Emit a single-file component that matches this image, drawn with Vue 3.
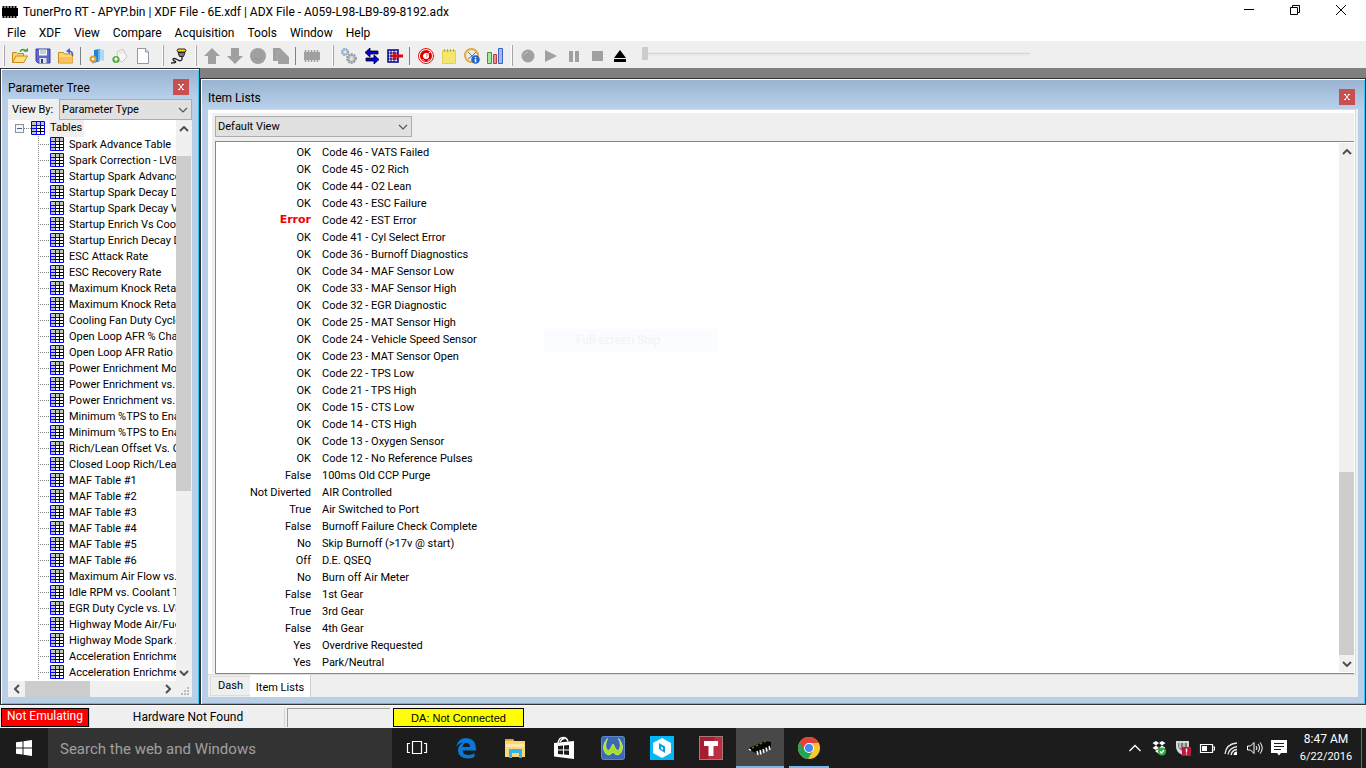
<script setup>
import { ref } from 'vue'

const menus = ['File', 'XDF', 'View', 'Compare', 'Acquisition', 'Tools', 'Window', 'Help']

const art = {
  open: '<path d="M.5 14.500V4.500h4l1 1h6v3" fill="#f7d270" stroke="#c58a1c"/><path d="M.5 14.500L4 8h11.500L12 14.500z" fill="#ffdd80" stroke="#c98d1d"/><path d="M8 3.500Q11-.5 14 3.500" fill="none" stroke="#35a02c" stroke-width="1.500"/><path d="M11.500 3.500H16V0z" fill="#35a02c"/>',
  save: '<path d="M1 1h14v14H3l-2-2z" fill="#5f66cc" stroke="#3b3f9c"/><path d="M4 1.500h8v6H4z" fill="#f6f6fa"/><path d="M5 3h6M5 5h6" stroke="#9aa"/><path d="M4.500 10h7v5h-7z" fill="#dfe2ea"/><path d="M6 11h2v4H6z" fill="#3a3f80"/>',
  close: '<path d="M.5 4.500h5l1 1.500h8v9H.5z" fill="#fbd77c" stroke="#c98d1d"/><path d="M1 9h13.500v5.500H1z" fill="#f3c25e"/><path d="M14.500 8Q15 3 10.500 3" fill="none" stroke="#4a63c4" stroke-width="1.600"/><path d="M8 3l4-3v6z" fill="#4a63c4"/>',
  xdf: '<path d="M5 2l6-1v12l-6 2z" fill="#1687d9"/><path d="M11 1l4 1v11l-4-1z" fill="#a9d9f7"/><path d="M9 2l2-1v12l-2 .6z" fill="#64b5ec"/><circle cx="4" cy="11" r="3.500" fill="#e0a03a"/><circle cx="4" cy="11" r="1.300" fill="#fff"/><path d="M4 13v2.500" stroke="#b87914"/>',
  adx: '<path d="M5 4l6-3 4 8-5 5-4-2z" fill="#f6f6f6" stroke="#c6c6c6"/><path d="M7 6l5-3" stroke="#d5d5d5"/><circle cx="4" cy="11.500" r="3.600" fill="#54a93b"/><path d="M4 13.500v-3M2.500 11.500L4 9.800l1.500 1.700" fill="none" stroke="#fff" stroke-width="1.200"/>',
  doc: '<path d="M2.500.5h8l3 3.500v11.500h-11z" fill="#fff" stroke="#8d97a5"/><path d="M10.500.5V4h3" fill="#dfe5ee" stroke="#8d97a5"/>',
  cable: '<path d="M6 2.500L7 1h7l1 1.500-1 1.500H7z" fill="#ffe200" stroke="#222"/><path d="M7 4.500h7l-1.500 4h-4z" fill="#777" stroke="#222"/><path d="M11 9v2.500Q9.500 14 6 11.500Q2.500 9.500 2 11.500Q2 13 4.500 13.500Q5.500 15 0 15" fill="none" stroke="#222" stroke-width="1.300"/>',
  up: '<path d="M8 0l8 8h-4v8H4V8H0z" fill="#a0a0a0"/>',
  down: '<path d="M8 16l8-8h-4V0H4v8H0z" fill="#a0a0a0"/>',
  face: '<circle cx="8" cy="8" r="8" fill="#a0a0a0"/><path d="M5 5h1M10 5h1M4 10q4 3 8 0" fill="none" stroke="#929292"/>',
  copy: '<path d="M0 0h7l4 4v9H0zM5 4h6l5 5v7H5z" fill="#a0a0a0"/><path d="M4.500 13V3.500H9" fill="none" stroke="#ababab"/>',
  chip: '<path d="M0 4h16v8H0z" fill="#a0a0a0"/><path d="M1.500 2v12M4.500 2v12M7.500 2v12M10.500 2v12M13.500 2v12" stroke="#a0a0a0" stroke-width="1.500"/>',
  gears: '<circle cx="4" cy="4" r="3" fill="#c6d6ea" stroke="#7d95b5" stroke-width="1.800" stroke-dasharray="1.600 .8"/><circle cx="4" cy="4" r="2.600" fill="#b3c8e2"/><circle cx="4" cy="4" r="1" fill="#f4f4f4"/><circle cx="10.500" cy="10.500" r="4.400" fill="none" stroke="#9599a0" stroke-width="2" stroke-dasharray="1.800 1"/><circle cx="10.500" cy="10.500" r="3.200" fill="#e4e6ea" stroke="#a2a6ad" stroke-width="1.600"/><circle cx="10.500" cy="10.500" r="1.200" fill="#fff" stroke="#aaa" stroke-width=".6"/>',
  swap: '<path d="M6 0v3h8v3H6v3L1 4.500zM10 7v3H2v3h8v3l5-4.500z" fill="#0000e0" stroke="#000" stroke-width=".8"/>',
  grid: '<path d="M1 2h10v12H1z" fill="#fff" stroke="#000080" stroke-width="1.500"/><path d="M1 5h10M1 8h10M1 11h10M4 2v12M7 2v12" stroke="#000080"/><path d="M4 8l5-4.500v3h7v3H9v3z" fill="#f00000"/>',
  target: '<circle cx="8" cy="8" r="7.500" fill="#fff" stroke="#e81010"/><circle cx="8" cy="8" r="4.500" fill="none" stroke="#e00000" stroke-width="3"/><circle cx="8" cy="8" r="2.500" fill="#fff"/><path d="M8 5.500l2.500 1.500L8 10z" fill="#d9b0b0"/><path d="M6 12.500L4.500 11M10 12.500l1.500-1.500M10.500 5.500L12 4" stroke="#fff"/>',
  note: '<path d="M1.500 2.500h13v13h-13z" fill="#f5e76d" stroke="#e5d34d"/><path d="M3.500 1v3M6.500 1v3M9.500 1v3M12.500 1v3" stroke="#a3a388"/>',
  clock: '<circle cx="7.500" cy="7.500" r="6.500" fill="#e4ebf3" stroke="#e5a63c" stroke-width="2"/><path d="M4 4l4 4 4-4M4 11l4-3" fill="none" stroke="#777"/><circle cx="11.500" cy="11.500" r="4.300" fill="#2065c9"/><path d="M11.500 9v1.200M11.500 11v3.200" stroke="#fff" stroke-width="1.500"/>',
  bars: '<path d="M.5 4.500h4v11h-4z" fill="#a6e89a" stroke="#3b9b32"/><path d="M6.500 6.500h3v9h-3z" fill="#f08c8c" stroke="#c23a3a"/><path d="M11.500.5h4v15h-4z" fill="#9dbbf7" stroke="#3a62c4"/>',
  rec: '<circle cx="8" cy="8" r="6.500" fill="#a0a0a0"/><path d="M4 7q1-3 4-3" fill="none" stroke="#c6c6c6"/>',
  play: '<path d="M2 2l12 6-12 6z" fill="#a0a0a0"/>',
  pause: '<path d="M3 3h4v11H3zM9 3h4v11H9z" fill="#a0a0a0"/>',
  stop: '<path d="M3 3h11v10H3z" fill="#a0a0a0"/>',
  eject: '<path d="M8 2l6 8H2zM2 11h12v3H2z" fill="#000"/>'
}

const toolbar = [
  { tools: ['open', 'save', 'close', '|', 'xdf', 'adx', 'doc'] },
  { wide: true, tools: ['cable'] },
  { tools: ['up', 'down', 'face', 'copy', '|', 'chip'] },
  { wide: true, tools: ['gears', 'swap', 'grid', '|', 'target', 'note', 'clock', 'bars'] },
  { tools: ['rec', 'play', 'pause', 'stop', 'eject'] }
]

const tables = [
  'Spark Advance Table', 'Spark Correction - LV8 vs. RPM', 'Startup Spark Advance', 'Startup Spark Decay Delay',
  'Startup Spark Decay Value', 'Startup Enrich Vs Coolant', 'Startup Enrich Decay Delay', 'ESC Attack Rate',
  'ESC Recovery Rate', 'Maximum Knock Retard', 'Maximum Knock Retard', 'Cooling Fan Duty Cycle',
  'Open Loop AFR % Change', 'Open Loop AFR Ratio', 'Power Enrichment Mode', 'Power Enrichment vs. RPM',
  'Power Enrichment vs. Temp', 'Minimum %TPS to Enable', 'Minimum %TPS to Enable', 'Rich/Lean Offset Vs. Coolant',
  'Closed Loop Rich/Lean', 'MAF Table #1', 'MAF Table #2', 'MAF Table #3', 'MAF Table #4', 'MAF Table #5',
  'MAF Table #6', 'Maximum Air Flow vs. RPM', 'Idle RPM vs. Coolant Temp', 'EGR Duty Cycle vs. LV8',
  'Highway Mode Air/Fuel', 'Highway Mode Spark Adv', 'Acceleration Enrichment', 'Acceleration Enrichment'
]

const items = [
  ['OK', 'Code 46 - VATS Failed'], ['OK', 'Code 45 - O2 Rich'], ['OK', 'Code 44 - O2 Lean'],
  ['OK', 'Code 43 - ESC Failure'], ['Error', 'Code 42 - EST Error'], ['OK', 'Code 41 - Cyl Select Error'],
  ['OK', 'Code 36 - Burnoff Diagnostics'], ['OK', 'Code 34 - MAF Sensor Low'], ['OK', 'Code 33 - MAF Sensor High'],
  ['OK', 'Code 32 - EGR Diagnostic'], ['OK', 'Code 25 - MAT Sensor High'], ['OK', 'Code 24 - Vehicle Speed Sensor'],
  ['OK', 'Code 23 - MAT Sensor Open'], ['OK', 'Code 22 - TPS Low'], ['OK', 'Code 21 - TPS High'],
  ['OK', 'Code 15 - CTS Low'], ['OK', 'Code 14 - CTS High'], ['OK', 'Code 13 - Oxygen Sensor'],
  ['OK', 'Code 12 - No Reference Pulses'], ['False', '100ms Old CCP Purge'], ['Not Diverted', 'AIR Controlled'],
  ['True', 'Air Switched to Port'], ['False', 'Burnoff Failure Check Complete'], ['No', 'Skip Burnoff (>17v @ start)'],
  ['Off', 'D.E. QSEQ'], ['No', 'Burn off Air Meter'], ['False', '1st Gear'], ['True', '3rd Gear'],
  ['False', '4th Gear'], ['Yes', 'Overdrive Requested'], ['Yes', 'Park/Neutral']
]

const apps = [
  { name: 'Task View', art: '<path d="M7.500 5.500h9v12h-9zM5 7.500H2.500v9H5M19 7.500h2.500v9H19" fill="none" stroke="#fff" stroke-width="1.200"/>' },
  { name: 'Edge', art: '<path d="M2 11Q4 2 12.500 2Q22 2.500 22 13v1.500H8.500q.5 4.500 6 4.500q3.500 0 6-1.800V21q-3 1.600-7 1.600Q4 22 4 14q0-4.500 5-7.500Q4.500 7 2 11zM8.600 11h7.400q0-4-3.500-4q-3.400.2-3.900 4z" fill="#0a78d8"/>' },
  { name: 'File Explorer', art: '<path d="M2 3h8l1 2h11v16H2z" fill="#f8d775"/><path d="M2 3h8l1 2H2z" fill="#e3a72f"/><path d="M3 8h18v3H3z" fill="#fde9a9"/><path d="M6 13h13v9h-3v-5H9v5H6z" fill="#35b4ec"/>' },
  { name: 'Store', art: '<path d="M2 7l20-2v18L2 20.500z" fill="#fff"/><path d="M6 7q1-5.500 5-5.500T16 5.500M8 6q2-3.500 4.500-3.500" fill="none" stroke="#fff" stroke-width="1.300"/><path d="M6 10l5-.5v4H6zM12 9.400l5-.5v4.600h-5zM6 14.500h5v4l-5-.6zM12 14.500h5v4.600l-5-.6z" fill="#1c1c1c"/>' },
  { name: 'WinTV', art: '<rect x=".5" y=".5" width="23" height="23" rx="2" fill="#3c68b5" stroke="#5d87c9"/><path d="M6.500 2.500Q0 10 4 16.500Q7.500 21.500 12 16Q16.500 21.500 20 16.500Q24 10 17.500 2.500Q20.500 9 18.500 13Q16.500 16.500 14.500 12.500L12 8L9.500 12.500Q7.500 16.500 5.500 13Q3.500 9 6.500 2.500z" fill="#a5e021" stroke="#d3f56c" stroke-width=".8"/>' },
  { name: 'Hex', art: '<path d="M0 0h24v24H0z" fill="#00b7f9"/><path d="M12 2l9 5v10l-9 5-9-5V7z" fill="#fff"/><path d="M9 7l6 3.500V17l-6-4z" fill="#079fd9"/><path d="M11 10.500l2 1.200V14l-2-1.200z" fill="#fff"/>' },
  { name: 'T', art: '<path d="M0 0h24v24H0z" fill="#a0787e"/><path d="M1 1h22v22H1z" fill="#a91c30"/><path d="M16 1h7v22H9z" fill="#c83b4d" opacity=".6"/><path d="M5 5h14v5h-4.500v10h-5V10H5z" fill="#fff"/>' },
  { name: 'TunerPro RT', active: true, art: '<path d="M1 12L17 5l6 1v5L8 17l-7-3z" fill="#050505"/><path d="M4 12l2-1M8 10l2-1M12 8l2-1M16 6l2-1" stroke="#686800" stroke-width="1.500"/><path d="M1 13l2 1.500M9 15l1 4M12 14l1 4.500M15 13l1 4M18 11.500l1 4M21 10l1 4" stroke="#fff" stroke-width="1.400"/>' },
  { name: 'Chrome', running: true, art: '<circle cx="12" cy="12" r="11" fill="#f7c92c"/><path d="M12 12L2.500 6.500A11 11 0 0 0 11 23l5-8.500z" fill="#25a35a"/><path d="M2.500 6.500A11 11 0 0 1 21.800 7H12l-4.500 7z" fill="#e1433a"/><circle cx="12" cy="12" r="5" fill="#fff"/><circle cx="12" cy="12" r="4" fill="#4688f1"/>' }
]

const tray = [
  { name: 'Show hidden icons', art: '<path d="M2.500 11L8 5.500l5.500 5.500" fill="none" stroke="#fff" stroke-width="1.300"/>' },
  { name: 'Dropbox', art: '<path d="M5 1l3 2-3 2.500L1.500 3zM11 1l3.500 2L11 5.500 8 3zM1.500 8L5 5.500 8 8l-3 2zM14.500 8L11 5.500 8 8l3 2zM4 11l4-2 3 2-3 3z" fill="#fff"/><circle cx="11" cy="11.500" r="4" fill="#2eaa3f"/><path d="M9 11.500l1.500 1.500 2.500-3" fill="none" stroke="#fff" stroke-width="1.200"/>' },
  { name: 'Security', art: '<path d="M1 1h13v6q0 5-6.500 8Q1 12 1 7z" fill="#d7d7d7"/><path d="M3 3h9v4H8v5Q4 9 3 7z" fill="#777"/><path d="M5 3v5M9 3v6" stroke="#fff"/><path d="M7 7h9v9H7z" fill="#bd173d"/><path d="M11.500 8.500v4M11.500 13.500v1" stroke="#fff" stroke-width="1.400"/>' },
  { name: 'Battery', art: '<path d="M1.500 4.500h12v8h-12zM14 7h1.500v3H14" fill="none" stroke="#fff" stroke-width="1.200"/><path d="M3 6h5v5H3z" fill="#fff"/>' },
  { name: 'Network', art: '<path d="M2 14Q3 4 14 3M5 14.500Q6 8 14 6.500M8 15q1-5 6-5.500" fill="none" stroke="#e8e8e8" stroke-width="1.300"/><path d="M10.500 15q0-3.500 3.500-3.500V15z" fill="#fff"/>' },
  { name: 'Volume', art: '<path d="M.5 6h3L7 2.500v11L3.500 10h-3z" fill="none" stroke="#fff"/><path d="M9 6q1.500 2 0 4M11 4q3 4 0 8M13 2.500q4.500 5.500 0 11" fill="none" stroke="#e8e8e8" stroke-width="1.100"/>' },
  { name: 'Notifications', art: '<path d="M0 0h16v13H10L8 15.500 6 13H0z" fill="#fff"/><path d="M3 3.500h10M3 6.500h10M3 9.500h7" stroke="#1c1c1c"/>' }
]

const treeScroll = [19, 335, 173]
const listScroll = [312, 183, 0]
const viewBy = ref('Parameter Type')
const view = ref('Default View')
</script>

<template>
  <div class="desktop">
    <header class="titlebar">
      <svg class="app-icon" viewBox="0 0 16 12" aria-hidden="true"><path d="M0 2h16v8H0z" /><path d="M1.500 0v12M4.500 0v12M7.500 0v12M10.500 0v12M13.500 0v12" stroke="#000" stroke-width="2" /></svg>
      <h1>TunerPro RT - APYP.bin | XDF File - 6E.xdf | ADX File - A059-L98-LB9-89-8192.adx</h1>
      <div class="caption">
        <button aria-label="Minimize"><svg viewBox="0 0 12 12"><path d="M1 5.500h10" /></svg></button>
        <button aria-label="Restore"><svg viewBox="0 0 12 12"><path d="M1.500 3.500h7v7h-7zM3.500 3V1.500h7v7H9" /></svg></button>
        <button aria-label="Close"><svg viewBox="0 0 12 12"><path d="M1 1l10 10M11 1L1 11" /></svg></button>
      </div>
    </header>

    <nav class="menubar"><button v-for="m in menus" :key="m">{{ m }}</button></nav>

    <div class="toolbar">
      <div v-for="(g, i) in toolbar" :key="i" class="group" :class="{ wide: g.wide }">
        <i class="grip"></i>
        <template v-for="(t, j) in g.tools" :key="j">
          <i v-if="t === '|'" class="sep"></i>
          <button v-else :aria-label="t"><svg viewBox="0 0 16 16" v-html="art[t]"></svg></button>
        </template>
      </div>
      <input class="seek" type="range" min="0" max="100" value="0" aria-label="Playback position" disabled />
    </div>

    <main class="mdi">
      <section class="child tree-win">
        <div class="child-title">
          <h2>Parameter Tree</h2>
          <button class="x" aria-label="Close Parameter Tree"><svg viewBox="0 0 6 6"><path d="M0 .5h2M4 .5h2M0 5.500h2M4 5.500h2M1 .5l4 5M5 .5l-4 5" /></svg></button>
        </div>
        <div class="view-by">
          <label for="viewby">View By:</label>
          <span class="combo">
            <select id="viewby" v-model="viewBy"><option>Parameter Type</option></select>
            <svg viewBox="0 0 10 6"><path d="M1 1l4 4 4-4" /></svg>
          </span>
        </div>
        <div class="tree-area">
          <div class="tree">
            <div class="root">
              <button class="expander" aria-label="Collapse Tables"></button><i class="dots"></i>
              <svg class="grid" viewBox="0 0 14 14"><path class="bg" d="M0 0h14v14H0z" /><path class="hd" d="M1 1h12v3H1zM1 4h4v9H1z" /><path class="ln" d="M5 7.500h8M5 10.500h8M9.500 4v9" /><path class="bl" d="M.5.5h13v13H.5zM1 4.500h12M1 7.500h4M1 10.500h4M5.500 1v12M9.500 1v3" /></svg>
              <span class="root-name">Tables</span>
            </div>
            <ul>
              <li v-for="(t, i) in tables" :key="i">
                <i class="dots"></i>
                <svg class="grid" viewBox="0 0 14 14"><path class="bg" d="M0 0h14v14H0z" /><path class="hd" d="M1 1h12v3H1zM1 4h4v9H1z" /><path class="ln" d="M5 7.500h8M5 10.500h8M9.500 4v9" /><path class="bl" d="M.5.5h13v13H.5zM1 4.500h12M1 7.500h4M1 10.500h4M5.500 1v12M9.500 1v3" /></svg>
                <span>{{ t }}</span>
              </li>
            </ul>
          </div>
          <div class="vbar">
            <button aria-label="Scroll up"><svg viewBox="0 0 10 6"><path d="M1 5l4-4 4 4" /></svg></button>
            <i :style="{ flexGrow: treeScroll[0] }"></i><i class="thumb" :style="{ flexGrow: treeScroll[1] }"></i><i :style="{ flexGrow: treeScroll[2] }"></i>
            <button aria-label="Scroll down"><svg viewBox="0 0 10 6"><path d="M1 1l4 4 4-4" /></svg></button>
          </div>
        </div>
        <div class="hbar">
          <button aria-label="Scroll left"><svg viewBox="0 0 6 10"><path d="M5 1L1 5l4 4" /></svg></button>
          <i class="thumb"></i><i class="rest"></i>
          <button aria-label="Scroll right"><svg viewBox="0 0 6 10"><path d="M1 1l4 4-4 4" /></svg></button>
          <svg class="size-grip" viewBox="0 0 9 9"><path d="M6 0h2v2H6zM3 3h2v2H3zM6 3h2v2H6zM0 6h2v2H0zM3 6h2v2H3zM6 6h2v2H6z" /></svg>
        </div>
      </section>

      <section class="child list-win">
        <div class="child-title">
          <h2>Item Lists</h2>
          <button class="x" aria-label="Close Item Lists"><svg viewBox="0 0 6 6"><path d="M0 .5h2M4 .5h2M0 5.500h2M4 5.500h2M1 .5l4 5M5 .5l-4 5" /></svg></button>
        </div>
        <div class="body">
          <div class="page">
            <div class="page-top">
              <span class="combo">
                <select v-model="view" aria-label="View"><option>Default View</option></select>
                <svg viewBox="0 0 10 6"><path d="M1 1l4 4 4-4" /></svg>
              </span>
            </div>
            <div class="list">
              <div class="list-main">
                <table>
                  <tbody>
                    <tr v-for="r in items" :key="r[1]">
                      <td class="value" :class="{ error: r[0] === 'Error' }">{{ r[0] }}</td>
                      <td>{{ r[1] }}</td>
                    </tr>
                  </tbody>
                </table>
              </div>
              <div class="ghost">Full-screen Snip</div>
              <div class="vbar">
                <button aria-label="Scroll up"><svg viewBox="0 0 10 6"><path d="M1 5l4-4 4 4" /></svg></button>
                <i :style="{ flexGrow: listScroll[0] }"></i><i class="thumb" :style="{ flexGrow: listScroll[1] }"></i><i :style="{ flexGrow: listScroll[2] }"></i>
                <button aria-label="Scroll down"><svg viewBox="0 0 10 6"><path d="M1 1l4 4 4-4" /></svg></button>
              </div>
            </div>
          </div>
          <div class="tabs"><button class="tab">Dash</button><button class="tab on">Item Lists</button></div>
        </div>
      </section>
    </main>

    <footer class="status">
      <span class="cell red">Not Emulating</span>
      <span class="hardware">Hardware Not Found</span>
      <span class="empty"></span>
      <span class="cell yellow">DA: Not Connected</span>
    </footer>

    <div class="taskbar">
      <button class="start" aria-label="Start"><svg viewBox="0 0 16 16"><path d="M0 2.300l6.500-.9v6.100H0zM7.500 1.200L16 0v7.500H7.500zM0 8.500h6.500v6.100L0 13.700zM7.500 8.500H16V16l-8.500-1.200z" /></svg></button>
      <input class="search" type="text" placeholder="Search the web and Windows" aria-label="Search the web and Windows" />
      <div class="apps">
        <button v-for="a in apps" :key="a.name" :aria-label="a.name" :class="{ active: a.active, running: a.running }"><svg viewBox="0 0 24 24" v-html="a.art"></svg></button>
      </div>
      <div class="tray">
        <button v-for="t in tray" :key="t.name" :aria-label="t.name"><svg viewBox="0 0 16 16" v-html="t.art"></svg></button>
      </div>
      <div class="clock"><span>8:47 AM</span><span class="date">6/22/2016</span></div>
      <i class="peek"></i>
    </div>
  </div>
</template>

<style>
body { margin: 0; }
</style>

<style scoped>
* { box-sizing: border-box; }
.desktop { display: flex; flex-direction: column; min-height: 100vh; overflow: hidden; background: #efefef; font: 12px/16px Roboto, sans-serif; color: #000; }
button, select, input { font: inherit; color: inherit; border: 0; padding: 0; margin: 0; background: none; border-radius: 0; }
svg { display: block; flex: none; }
h1, h2 { margin: 0; font-size: 12px; font-weight: 400; }

.titlebar { display: flex; align-items: center; height: 24px; background: #fff; padding-left: 2px; }
.app-icon { width: 16px; height: 12px; margin-right: 5px; }
.caption { display: flex; margin: 0 2px 4px auto; }
.caption button { width: 46px; height: 20px; display: flex; align-items: center; justify-content: center; }
.caption svg { width: 12px; height: 12px; fill: none; stroke: #000; }
.menubar { display: flex; gap: 13px; padding: 0 7px; height: 17px; background: #fff; }
.menubar button { line-height: 18px; }

.toolbar { display: flex; align-items: center; height: 27px; padding: 2px 0 0 3px; }
.group { display: flex; align-items: center; margin-left: 5px; }
.group:first-child { margin-left: 0; }
.group.wide { margin-left: 8px; }
.group.wide ~ .group.wide { margin-left: 9px; }
.group button { width: 23px; height: 22px; padding-left: 4px; }
.group svg { width: 16px; height: 16px; }
.grip { width: 2px; height: 21px; background: #a6a6a6; border-left: 1px solid #fff; margin-right: 3px; }
.sep { width: 1px; height: 18px; background: #808080; margin: 0 4px 0 3px; }
.seek { appearance: none; width: 388px; height: 14px; margin: 0 0 4px 11px; background: linear-gradient(#d6d6d6, #d6d6d6) center / 100% 1px no-repeat, linear-gradient(#e7eaea, #e7eaea) center / 100% 4px no-repeat; }
.seek::-webkit-slider-thumb { appearance: none; width: 6px; height: 13px; background: #ccc; }

.mdi { display: flex; align-items: stretch; flex: 1; background: #808080; }
.child { display: flex; flex-direction: column; min-width: 0; border: 1px solid #303236; background: #b9cfe8; box-shadow: inset 1px 1px #fff, inset -1px -1px #3cc8f0; }
.tree-win { width: 200px; flex: none; padding: 1px 7px 7px; }
.list-win { flex: 1; margin-top: 10px; padding: 1px 7px 7px; }
.child-title { display: flex; align-items: center; justify-content: space-between; height: 29px; margin: 0 -6px; padding: 6px 9px 0 6px; background: linear-gradient(#98b3d0, #b9d0ea); }
.x { width: 16px; height: 16px; margin-top: -2px; background: #c75050; display: flex; align-items: center; justify-content: center; }
.x svg { width: 6px; height: 6px; fill: none; stroke: #fff; }

.view-by { display: flex; align-items: center; height: 21px; background: #efefef; font-size: 11px; }
.view-by label { width: 51px; padding-left: 4px; flex: none; white-space: nowrap; }
.view-by .combo { flex: 1; }
.combo { position: relative; display: block; height: 21px; font-size: 11px; }
.combo select { appearance: none; display: block; width: 100%; height: 100%; border: 1px solid #acacac; background: #e1e1e1; padding: 1px 18px 0 2px; line-height: 18px; }
.combo svg { position: absolute; right: 4px; top: 8px; width: 10px; height: 6px; fill: none; stroke: #555; stroke-width: 1.2; pointer-events: none; }

.tree-area { display: flex; flex: 1; background: #fff; font-size: 11px; }
.tree { flex: 1; min-width: 0; margin-right: 1px; overflow: hidden; white-space: nowrap; }
.root { display: flex; align-items: center; height: 16px; padding-left: 7px; }
.expander { width: 9px; height: 9px; border: 1px solid #919191; background: linear-gradient(#3a5fa8, #3a5fa8) center / 5px 1px no-repeat #f6f6f6; }
.dots { height: 1px; width: 7px; background: repeating-linear-gradient(90deg, #808080 0 1px, transparent 1px 2px); flex: none; }
.root-name { background: #efefef; padding: 0 2px 0 1px; margin-left: 4px; line-height: 18px; }
.grid { width: 14px; height: 14px; fill: none; }
.grid .bg { fill: #fff; }
.grid .hd { fill: #c6c6c6; }
.grid .ln { stroke: #000; }
.grid .bl { stroke: #0000ff; }
ul { list-style: none; margin: 0 0 0 30px; padding: 0; background: repeating-linear-gradient(#808080 0 1px, transparent 1px 2px) left / 1px 100% no-repeat; }
li { display: flex; align-items: center; height: 16px; }
li .dots { width: 12px; }
li span { margin-left: 5px; line-height: 16px; padding-top: 1px; }

.vbar { display: flex; flex-direction: column; width: 16px; flex: none; background: #f0f0f0; }
.vbar button { height: 17px; flex: none; display: flex; align-items: center; justify-content: center; }
.vbar i { flex: 0 0 0; }
.thumb { background: #cdcdcd; }
.vbar svg { width: 10px; height: 6px; }
.vbar svg, .hbar button svg { fill: none; stroke: #505050; stroke-width: 2; }
.tree-area .vbar { margin-left: -1px; padding-right: 1px; }
.list .vbar { width: 15px; margin: 1px 0; }
.hbar { display: flex; height: 16px; background: #f0f0f0; }
.hbar button { width: 17px; display: flex; align-items: center; justify-content: center; }
.hbar button svg { width: 6px; height: 10px; }
.hbar .thumb { flex: 65; }
.hbar .rest { flex: 69; }
.size-grip { width: 9px; height: 9px; margin: 6px 2px 0 5px; fill: #bcbcbc; }

.body { flex: 1; display: flex; flex-direction: column; background: #efefef; padding-right: 2px; }
.page { flex: 1; display: flex; flex-direction: column; border: 1px solid #dcdcdc; border-width: 1px 1px 1px 0; box-shadow: inset 4px 3px #fff, inset -1px -1px #fff; padding: 6px 1px 0 7px; }
.page-top { height: 25px; }
.page-top .combo { width: 197px; }
.list { position: relative; flex: 1; display: flex; background: #fff; border: 1px solid #828790; border-right: 0; }
.list-main { flex: 1; padding-top: 2px; }
table { border-collapse: collapse; font-size: 11px; line-height: 17px; }
td { padding: 0; white-space: nowrap; }
.value { width: 106px; padding-right: 11px; text-align: right; }
.error { color: #f00000; font: bold 11px/15px "DejaVu Sans", sans-serif; vertical-align: top; }
.ghost { position: absolute; left: 328px; top: 187px; width: 173px; height: 23px; padding-left: 32px; line-height: 23px; background: #fbfcff; color: #f1f3f6; }
.tabs { display: flex; align-items: flex-start; height: 22px; padding-left: 2px; font-size: 11px; }
.tab { width: 40px; height: 20px; padding: 0; margin-top: 1px; border: 1px solid #dcdcdc; border-right: 0; line-height: 18px; }
.tab.on { width: 61px; height: 22px; margin-top: 0; padding-top: 3px; background: #fff; border: 0; border-right: 1px solid #d0d0d0; }

.status { display: flex; align-items: center; height: 23px; padding: 2px 1px 1px; border-top: 1px solid #fafafa; }
.cell { height: 19px; border: 1px solid #000; text-align: center; line-height: 17px; }
.red { width: 88px; background: #f00; color: #fff; line-height: 15px; }
.hardware { width: 196px; padding-left: 2px; text-align: center; border-right: 1px solid #d6d6d6; border-left: 1px solid #d6d6d6; line-height: 19px; }
.empty { width: 103px; height: 19px; margin: 0 3px 0 2px; border: 1px solid #a0a0a0; border-width: 1px 0 0 1px; }
.yellow { width: 131px; background: #ff0; font: 11px/18px "Liberation Sans", sans-serif; }

.taskbar { display: flex; height: 40px; background: #1c1c1c; color: #fff; }
.start { width: 48px; display: flex; align-items: center; justify-content: center; }
.start svg { width: 16px; height: 16px; fill: #fff; }
.search { width: 344px; padding: 1px 12px 0; background: #333; font-size: 15px; color: #a6a6a6; }
.search::placeholder { color: #a0a0a0; opacity: 1; }
.apps { display: flex; gap: 1px; padding-left: 1px; }
.apps button { width: 48px; display: flex; align-items: center; justify-content: center; }
.apps svg { width: 24px; height: 24px; }
.apps .active { background: #484848; box-shadow: inset 0 -2px #76b9ed; }
.apps .running { background: linear-gradient(#76b9ed, #76b9ed) bottom / 40px 2px no-repeat; }
.tray { display: flex; margin-left: auto; }
.tray button { width: 24px; display: flex; align-items: center; justify-content: center; }
.tray svg { width: 16px; height: 16px; }
.clock { width: 70px; display: flex; flex-direction: column; justify-content: center; text-align: center; line-height: 17px; }
.date { font-size: 11px; }
.peek { width: 5px; border-left: 1px solid #6a6a6a; }
</style>
